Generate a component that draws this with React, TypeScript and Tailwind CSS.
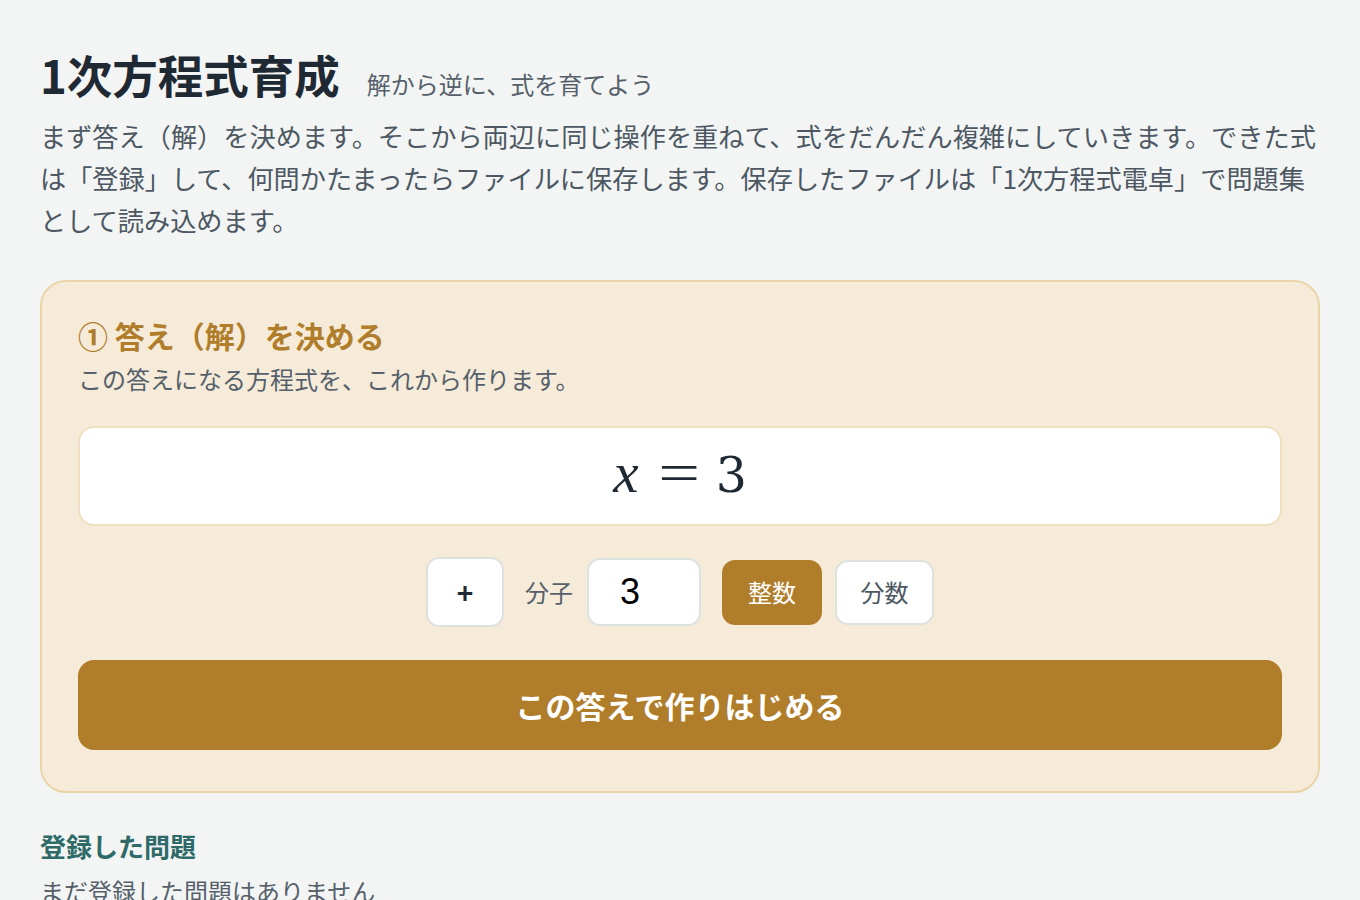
import { useState } from "react";

const jp = "font-['Noto_Sans_CJK_JP','Noto_Sans',sans-serif]";

export default function App() {
  const [value, setValue] = useState("3");
  const [mode, setMode] = useState<"int" | "frac">("int");

  return (
    <div className={`min-h-screen bg-[#f3f5f4] px-10 pt-[47px] pb-10 ${jp}`}>
      <header className="flex items-baseline gap-[27px]">
        <h1 className="text-[45.5px] font-bold leading-[54px] text-[#1f2933]">1次方程式育成</h1>
        <span className="text-[24px] text-[#55606b]">解から逆に、式を育てよう</span>
      </header>
      <p className="mt-[13px] text-[26.2px] leading-[42px] text-[#4d5863]">
        まず答え（解）を決めます。そこから両辺に同じ操作を重ねて、式をだんだん複雑にしていきます。できた式は「登録」して、何問かたまったらファイルに保存します。保存したファイルは「1次方程式電卓」で問題集として読み込めます。
      </p>

      <section className="mt-[39px] rounded-[26px] border-2 border-[#e9d4a8] bg-[#f6ebd9] px-[36px] pt-[32px] pb-[41px]">
        <h2 className="text-[30px] font-bold leading-[42px] text-[#b07d2b]">① 答え（解）を決める</h2>
        <p className="mt-[4px] text-[24px] leading-[38px] text-[#55606b]">
          この答えになる方程式を、これから作ります。
        </p>

        <div className="mt-[28px] flex h-[100px] items-center justify-center rounded-[16px] border-2 border-[#efe0c2] bg-white">
          <span className="-mt-[8px] flex items-baseline font-['Liberation_Serif',serif] text-[57px] leading-none text-[#1f2933]">
            <i>x</i>
            <span className="ml-[25px] mr-[20px] inline-block scale-x-[1.3]">=</span>
            <span className="font-['DejaVu_Serif',serif] text-[49px]">3</span>
          </span>
        </div>

        <div className="mt-[31px] flex items-center justify-center">
          <button className="flex h-[70px] w-[78px] items-center justify-center rounded-[13px] border-2 border-[#dde2df] bg-white text-[28px] font-bold text-[#1f2933]">
            +
          </button>
          <span className="ml-[21px] text-[24px] text-[#55606b]">分子</span>
          <input
            value={value}
            onChange={(e) => setValue(e.target.value)}
            className="ml-[14px] h-[68px] w-[114px] rounded-[13px] border-2 border-[#dde2df] bg-white px-[31px] font-['Liberation_Sans',sans-serif] text-[36px] text-black outline-none"
          />
          <button
            onClick={() => setMode("int")}
            className={`ml-[21px] h-[65px] w-[100px] rounded-[13px] border-2 text-[24px] ${
              mode === "int"
                ? "border-[#b07d2b] bg-[#b07d2b] text-white"
                : "border-[#dde2df] bg-white text-[#4d5863]"
            }`}
          >
            整数
          </button>
          <button
            onClick={() => setMode("frac")}
            className={`ml-[13px] h-[65px] w-[99px] rounded-[13px] border-2 text-[24px] ${
              mode === "frac"
                ? "border-[#b07d2b] bg-[#b07d2b] text-white"
                : "border-[#dde2df] bg-white text-[#4d5863]"
            }`}
          >
            分数
          </button>
        </div>

        <button className="mt-[33px] h-[90px] w-full rounded-[16px] bg-[#b07d2b] text-[30px] font-bold text-white">
          この答えで作りはじめる
        </button>
      </section>

      <h3 className="mt-[35px] text-[26px] font-bold leading-[36px] text-[#2e6b68]">登録した問題</h3>
      <p className="mt-[10px] text-[24px] leading-[34px] text-[#55606b]">まだ登録した問題はありません</p>
    </div>
  );
}
